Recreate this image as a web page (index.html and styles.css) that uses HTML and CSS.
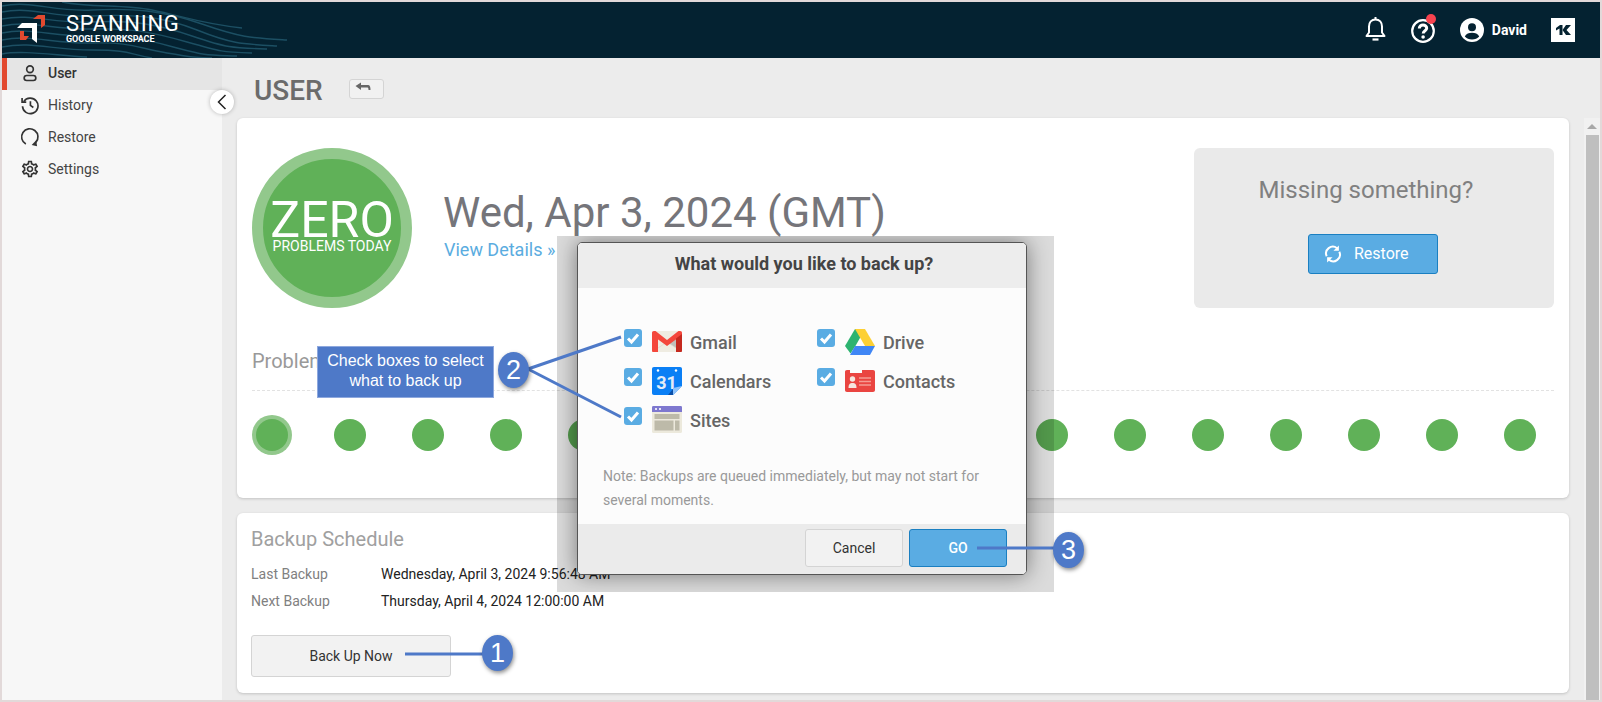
FILE: index.html
```html
<!DOCTYPE html>
<html lang="en">
<head>
<meta charset="utf-8">
<title>Spanning</title>
<link rel="stylesheet" href="styles.css">
</head>
<body>
<div class="frame">
  <header class="topbar">
    <svg class="waves" viewBox="0 0 290 56" width="290" height="56" fill="none" stroke="#1c4f63" stroke-width="1.400">
      <path d="M0 4C30 -2 50 10 90 8S160 8 200 22 250 36 285 38"/>
      <path d="M0 10C30 4 50 16 90 14S160 14 195 28 240 42 275 44"/>
      <path d="M0 17C30 11 50 22 90 20S155 22 190 34 230 46 265 47"/>
      <path d="M0 24C30 18 50 28 90 27S150 30 185 40 220 50 250 51"/>
      <path d="M0 31C30 25 50 35 90 34S145 38 175 46 205 53 235 54"/>
      <path d="M0 38C30 32 50 42 90 41S135 46 165 51 190 55 210 56"/>
      <path d="M0 45C30 39 50 48 90 48S125 52 150 56"/>
      <path d="M0 52C20 48 50 53 85 55"/>
      <path d="M60 0C90 6 120 2 150 8S200 22 240 26"/>
    </svg>
    <div class="brand">
      <svg class="logo" viewBox="0 0 30 30" width="30" height="30">
        <path d="M0 14 5 9H20V29L15 25V14Z" fill="#fff"/>
        <path d="M16 5 21 1H28V11L24 14V5Z" fill="#e2492f"/>
        <path d="M3 17H7V22H12L9 26H3Z" fill="#e2492f"/>
      </svg>
      <div class="brand-text">
        <div class="brand-name">SPANNING</div>
        <div class="brand-sub">GOOGLE WORKSPACE</div>
      </div>
    </div>
    <div class="top-actions">
      <svg class="bell" viewBox="0 0 21 25" width="21" height="25" fill="none" stroke="#fff" stroke-width="2">
        <path d="M1.500 20H19.500L17 16.500V10.500C17 6.500 14.500 3.500 10.500 3.500S4 6.500 4 10.500V16.500Z" stroke-linejoin="round"/>
        <path d="M10.500 1V3.500"/>
        <path d="M7.500 23.500H13.500" stroke-width="2.200"/>
      </svg>
      <div class="help">
        <svg viewBox="0 0 24 24" width="24" height="24" fill="none" stroke="#fff">
          <circle cx="12" cy="12" r="10.800" stroke-width="2.200"/>
          <path d="M8.300 9.500C8.300 7.300 10 6 12 6S15.700 7.300 15.700 9.300C15.700 11.700 12.200 11.800 12.200 14.500" stroke-width="3"/>
          <circle cx="12.100" cy="18" r="1.800" fill="#fff" stroke="none"/>
        </svg>
        <span class="help-dot"></span>
      </div>
      <div class="account">
        <svg viewBox="0 0 24 24" width="24" height="24">
          <circle cx="12" cy="12" r="12" fill="#fff"/>
          <circle cx="12" cy="9.200" r="4" fill="#042231"/>
          <path d="M4.800 18.600C6 15.800 9 14.800 12 14.800S18 15.800 19.200 18.600C17.500 20.500 15 21.500 12 21.500S6.500 20.500 4.800 18.600Z" fill="#042231"/>
        </svg>
        <span class="account-name">David</span>
      </div>
      <div class="kbox">
        <svg viewBox="0 0 24 24" width="24" height="24">
          <path d="M5 10 9 7H11.500V17H8.500V10.500L5 12.500Z" fill="#042231"/>
          <path d="M15 7H20L15.500 12 20 17H15L11.500 12Z" fill="#042231"/>
        </svg>
      </div>
    </div>
  </header>

  <div class="workspace">
    <nav class="sidebar">
      <a class="nav-item active">
        <svg viewBox="0 0 24 24" width="20" height="20" fill="none" stroke="#333" stroke-width="2"><circle cx="12" cy="7.500" r="4"/><rect x="5" y="15" width="14" height="6" rx="3"/></svg>
        <span>User</span>
      </a>
      <a class="nav-item">
        <svg viewBox="0 0 24 24" width="20" height="20" fill="none" stroke="#333" stroke-width="2"><path d="M4.500 8A9.300 9.300 0 1 1 3 13.500"/><path d="M2.500 3.500V8.500H7.500"/><path d="M12.500 7.500V12.500L16 15"/></svg>
        <span>History</span>
      </a>
      <a class="nav-item">
        <svg viewBox="0 0 24 24" width="20" height="20" fill="none" stroke="#333" stroke-width="2"><path d="M7 20.500A9.800 9.800 0 1 1 19 18.500"/><path d="M14 21.500 19.500 16 20.500 23Z" fill="#333" stroke="none"/></svg>
        <span>Restore</span>
      </a>
      <a class="nav-item">
        <svg viewBox="0 0 24 24" width="20" height="20"><path d="M19.430 12.980c.04-.32.07-.64.07-.98 0-.34-.03-.66-.07-.98l2.110-1.650c.19-.15.24-.42.12-.64l-2-3.460c-.09-.16-.26-.25-.44-.25-.06 0-.12.01-.17.03l-2.490 1c-.52-.4-1.080-.73-1.690-.98l-.38-2.650C14.460 2.180 14.250 2 14 2h-4c-.25 0-.46.18-.49.42l-.38 2.650c-.61.25-1.170.59-1.690.98l-2.490-1c-.06-.02-.12-.03-.18-.03-.17 0-.34.09-.43.25l-2 3.460c-.13.22-.07.49.12.64l2.110 1.650c-.04.32-.07.65-.07.98 0 .33.03.66.07.98l-2.110 1.650c-.19.15-.24.42-.12.64l2 3.460c.09.16.26.25.44.25.06 0 .12-.01.17-.03l2.490-1c.52.4 1.080.73 1.690.98l.38 2.650c.03.24.24.42.49.42h4c.25 0 .46-.18.49-.42l.38-2.650c.61-.25 1.170-.59 1.690-.98l2.490 1c.06.02.12.03.18.03.17 0 .34-.09.43-.25l2-3.460c.12-.22.07-.49-.12-.64l-2.110-1.650zm-1.980-1.710c.04.31.05.52.05.73 0 .21-.02.43-.05.73l-.14 1.130.89.7 1.080.84-.7 1.210-1.270-.51-1.040-.42-.9.68c-.43.32-.84.56-1.250.73l-1.060.43-.16 1.130-.2 1.350h-1.400l-.19-1.350-.16-1.130-1.060-.43c-.43-.18-.83-.41-1.230-.71l-.91-.7-1.060.43-1.270.51-.7-1.210 1.080-.84.89-.7-.14-1.130c-.03-.31-.05-.54-.05-.74s.02-.43.05-.73l.14-1.130-.89-.7-1.080-.84.7-1.210 1.270.51 1.040.42.9-.68c.43-.32.84-.56 1.250-.73l1.060-.43.16-1.130.2-1.350h1.390l.19 1.350.16 1.130 1.060.43c.43.18.83.41 1.230.71l.91.7 1.060-.43 1.270-.51.7 1.210-1.070.85-.89.7.14 1.130zM12 8c-2.210 0-4 1.790-4 4s1.790 4 4 4 4-1.790 4-4-1.790-4-4-4zm0 6c-1.100 0-2-.9-2-2s.9-2 2-2 2 .9 2 2-.9 2-2 2z"/></svg>
        <span>Settings</span>
      </a>
      <button class="collapse" type="button" aria-label="Collapse">
        <svg viewBox="0 0 12 16" width="12" height="16" fill="none" stroke="#222" stroke-width="1.500"><path d="M9.500 1 2.500 8 9.500 15"/></svg>
      </button>
    </nav>

    <main class="main">
      <div class="page-head">
        <h1 class="page-title">USER</h1>
        <button class="back" type="button" aria-label="Back">
          <svg viewBox="0 0 16 10" width="16" height="10"><path d="M0.500 4 6 0.500V3H13C15 3 15.500 5 15.500 8H13.500C13.500 6 13 5.500 12 5.500H6V8Z" fill="#666"/></svg>
        </button>
      </div>
      <div class="content">
        <div class="cards">
          <section class="card card-status">
            <div class="status-top">
              <div class="zero">
                <div class="zero-big">ZERO</div>
                <div class="zero-small">PROBLEMS TODAY</div>
              </div>
              <div class="date-block">
                <div class="date">Wed, Apr 3, 2024 (GMT)</div>
                <a class="details">View Details »</a>
              </div>
              <div class="missing">
                <div class="missing-title">Missing something?</div>
                <button class="primary restore-btn" type="button">
                  <svg viewBox="0 0 20 20" width="18" height="18" fill="none" stroke="#fff" stroke-width="2.200"><path d="M3 12.500A7.500 7.500 0 0 1 14.500 3.500"/><path d="M17 7.500A7.500 7.500 0 0 1 5.500 16.500"/><path d="M16.500 0.500V6.500H10.500Z" fill="#fff" stroke="none"/><path d="M3.500 19.500V13.500H9.500Z" fill="#fff" stroke="none"/></svg>
                  <span>Restore</span>
                </button>
              </div>
            </div>
            <h2 class="problems-title">Problems</h2>
            <div class="dots">
              <span class="dot first"></span><span class="dot"></span><span class="dot"></span><span class="dot"></span><span class="dot"></span><span class="dot"></span><span class="dot"></span><span class="dot"></span><span class="dot"></span><span class="dot"></span><span class="dot"></span><span class="dot"></span><span class="dot"></span><span class="dot"></span><span class="dot"></span><span class="dot"></span><span class="dot"></span>
            </div>
          </section>
          <section class="card card-schedule">
            <h2 class="schedule-title">Backup Schedule</h2>
            <div class="schedule-row"><span class="schedule-label">Last Backup</span><span>Wednesday, April 3, 2024 9:56:48 AM</span></div>
            <div class="schedule-row"><span class="schedule-label">Next Backup</span><span>Thursday, April 4, 2024 12:00:00 AM</span></div>
            <button class="secondary backup-btn" type="button">Back Up Now</button>
          </section>
        </div>
        <div class="scrollbar"><span class="scroll-arrow"></span><span class="scroll-thumb"></span></div>
      </div>
    </main>
  </div>

  <div class="scrim">
    <div class="dialog">
      <div class="dialog-head">What would you like to back up?</div>
      <div class="dialog-body">
        <div class="options">
          <div class="option">
            <span class="check"><svg viewBox="0 0 18 18" width="18" height="18" fill="none" stroke="#fff" stroke-width="3"><path d="M4 9.500 7.500 13 14 5.500"/></svg></span>
            <svg class="app-icon" viewBox="0 0 30 21" width="30" height="21">
              <rect width="30" height="21" rx="1.500" fill="#efece2"/>
              <path d="M24 4 15 11 30 21V4Z" fill="#c0bfba"/>
              <path d="M0 21 15 11 30 21" fill="none" stroke="#dcd9cf" stroke-width=".7"/>
              <path d="M0 2C0 .7 .7 0 2 0H3.500L15 9 26.500 0H28C29.300 0 30 .7 30 2V4L15 15 0 4Z" fill="#f4473c"/>
              <path d="M0 3 6 7.500V21H1.500C.5 21 0 20.500 0 19.500Z" fill="#f4473c"/>
              <path d="M30 3 24 7.500V21H28.500C29.500 21 30 20.500 30 19.500Z" fill="#c5291f"/>
            </svg>
            <span class="app-label">Gmail</span>
          </div>
          <div class="option">
            <span class="check"><svg viewBox="0 0 18 18" width="18" height="18" fill="none" stroke="#fff" stroke-width="3"><path d="M4 9.500 7.500 13 14 5.500"/></svg></span>
            <svg class="app-icon" viewBox="0 0 30 28" width="30" height="28">
              <path d="M10 1H20L11 17 5.500 25.500 0 18Z" fill="#2db370"/>
              <path d="M10 1H20L30 18H20Z" fill="#fdd034"/>
              <path d="M10 18H30L25 27H5Z" fill="#3f86f5"/>
            </svg>
            <span class="app-label">Drive</span>
          </div>
          <div class="option">
            <span class="check"><svg viewBox="0 0 18 18" width="18" height="18" fill="none" stroke="#fff" stroke-width="3"><path d="M4 9.500 7.500 13 14 5.500"/></svg></span>
            <svg class="app-icon" viewBox="0 0 30 28" width="30" height="28">
              <path d="M2 0H28C29.300 0 30 .7 30 2V19L21 28H2C.7 28 0 27.300 0 26V2C0 .7 .7 0 2 0Z" fill="#0a7ff5"/>
              <circle cx="6" cy="3.500" r="1.200" fill="#fff"/><circle cx="24" cy="3.500" r="1.200" fill="#fff"/>
              <text x="14.500" y="22" class="cal-num">31</text>
              <path d="M30 19 21 28V21Z" fill="#8ec3fb"/>
              <path d="M21 19V28H16L21 22Z" fill="#0a4fa8"/>
            </svg>
            <span class="app-label">Calendars</span>
          </div>
          <div class="option">
            <span class="check"><svg viewBox="0 0 18 18" width="18" height="18" fill="none" stroke="#fff" stroke-width="3"><path d="M4 9.500 7.500 13 14 5.500"/></svg></span>
            <svg class="app-icon" viewBox="0 0 30 22" width="30" height="22">
              <path d="M2 0H5V3H17V0H25L28 0C29.300 0 30 .7 30 2V20C30 21.300 29.300 22 28 22H2C.7 22 0 21.300 0 20V2C0 .7 .7 0 2 0Z" fill="#ea4541"/>
              <circle cx="7.500" cy="9" r="2.700" fill="#f6e6df"/>
              <path d="M3.500 18C3.500 14 5 13 7.500 13S11.500 14 11.500 18Z" fill="#f6e6df"/>
              <path d="M14 8H26M14 11.500H26M14 15H26" stroke="#f59b92" stroke-width="1.300"/>
            </svg>
            <span class="app-label">Contacts</span>
          </div>
          <div class="option">
            <span class="check"><svg viewBox="0 0 18 18" width="18" height="18" fill="none" stroke="#fff" stroke-width="3"><path d="M4 9.500 7.500 13 14 5.500"/></svg></span>
            <svg class="app-icon" viewBox="0 0 30 27" width="30" height="27">
              <rect width="30" height="27" rx="1.500" fill="#ece9dc"/>
              <path d="M1.500 0H28.500C29.500 0 30 .5 30 1.500V6H0V1.500C0 .5 .5 0 1.500 0Z" fill="#7e78cf"/>
              <rect x="3" y="2" width="2" height="2" fill="#e6e4f5"/><rect x="7" y="2" width="2" height="2" fill="#e6e4f5"/>
              <rect x="2.500" y="8" width="25" height="5" fill="#bdbaa9"/>
              <rect x="2.500" y="14.500" width="19" height="10" fill="#bdbaa9"/>
              <rect x="23" y="14.500" width="4.500" height="10" fill="#bdbaa9"/>
            </svg>
            <span class="app-label">Sites</span>
          </div>
        </div>
        <p class="note">Note: Backups are queued immediately, but may not start for several moments.</p>
      </div>
      <div class="dialog-foot">
        <button class="secondary dialog-btn" type="button">Cancel</button>
        <button class="primary dialog-btn go" type="button">GO</button>
      </div>
    </div>
  </div>

  <svg class="callout-lines" viewBox="0 0 1602 702" width="1602" height="702" fill="none" stroke="#4e79c8" stroke-width="3">
    <path d="M528 369 621 337"/>
    <path d="M528 369 621 417"/>
    <path d="M405 654H484"/>
    <path d="M977 548H1055"/>
  </svg>
  <div class="callout-box">Check boxes to select<br>what to back up</div>
  <div class="badge badge-one">1</div>
  <div class="badge badge-two">2</div>
  <div class="badge badge-three">3</div>
</div>
</body>
</html>
```
FILE: styles.css
```css
* { box-sizing: border-box; }
html, body { margin: 0; padding: 0; }
body { font-family: Roboto, "Liberation Sans", sans-serif; color: #333; overflow: hidden; }
button { font-family: inherit; cursor: pointer; }
h1, h2, p { margin: 0; }

.frame { position: relative; width: 1602px; height: 702px; border: 2px solid #e2d9d9; display: flex; flex-direction: column; background: #ececec; overflow: hidden; }

.topbar { position: relative; flex: none; height: 56px; background: #042231; display: flex; align-items: stretch; justify-content: space-between; overflow: hidden; }
.waves { position: absolute; left: 0; top: 0; }
.brand { position: relative; display: flex; padding: 10px 0 0 15px; }
.logo { margin-top: 2px; }
.brand-text { margin-left: 19px; }
.brand-name { font-size: 22px; line-height: 23px; color: #fff; letter-spacing: .7px; }
.brand-sub { font-size: 9px; line-height: 11px; font-weight: 700; color: #fff; letter-spacing: -.1px; margin-top: -1px; }

.top-actions { display: flex; align-items: flex-start; padding: 14px 25px 0 0; }
.bell { margin-right: 25px; }
.help { position: relative; width: 24px; height: 24px; margin: 3px 25px 0 0; }
.help svg { display: block; }
.help-dot { position: absolute; right: -1px; top: -5px; width: 10px; height: 10px; border-radius: 50%; background: #f8434f; }
.account { display: flex; align-items: center; gap: 8px; margin: 2px 24px 0 0; height: 24px; }
.account-name { font-size: 14px; font-weight: 700; color: #fff; }
.kbox { width: 24px; height: 24px; background: #fff; margin-top: 2px; }
.kbox svg { display: block; }

.workspace { flex: 1; display: flex; min-height: 0; }

.sidebar { position: relative; flex: none; width: 220px; background: #f7f7f7; }
.nav-item { display: flex; align-items: center; height: 32px; padding: 0 0 2px 18px; font-size: 14px; color: #444; gap: 8px; }
.nav-item svg { flex: none; fill: #333; }
.nav-item svg[fill="none"] { fill: none; }
.nav-item.active { background: #e5e5e5; border-left: 5px solid #e2492f; padding-left: 13px; font-weight: 500; color: #333; }
.collapse { position: absolute; right: -12px; top: 32px; width: 24px; height: 24px; padding: 0; border: 0; border-radius: 50%; background: #fff; box-shadow: 0 0 4px rgba(0,0,0,.25); display: flex; align-items: center; justify-content: center; z-index: 1; }

.main { flex: 1; min-width: 0; padding-left: 15px; display: flex; flex-direction: column; }
.page-head { flex: none; height: 60px; display: flex; align-items: center; padding: 4px 0 0 17px; }
.page-title { font-size: 28px; font-weight: 500; color: #6b6b6b; margin-right: 26px; }
.back { width: 35px; height: 20px; margin-top: -3px; padding: 0; background: #f1f1f1; border: 1px solid #d4d4d4; border-radius: 3px; display: flex; align-items: center; justify-content: center; }
.back svg { margin-left: -6px; margin-top: -3px; }

.content { flex: 1; display: flex; gap: 15px; min-height: 0; }
.cards { width: 1332px; flex: none; display: flex; flex-direction: column; gap: 15px; }
.card { background: #fff; border-radius: 6px; box-shadow: 0 1px 3px rgba(0,0,0,.18); }

.card-status { height: 380px; padding: 30px 15px 0; }
.status-top { display: flex; height: 160px; }
.zero { flex: none; width: 160px; height: 160px; border-radius: 50%; background: #60b158; border: 11px solid #92c88c; color: #fff; text-align: center; padding-top: 42px; }
.zero-big { font-size: 50px; line-height: 38px; }
.zero-small { font-size: 14px; line-height: 14px; white-space: nowrap; }
.date-block { flex: 1; padding: 40px 0 0 31px; }
.date { font-size: 42px; line-height: 50px; color: #75757a; white-space: nowrap; }
.details { display: block; font-size: 18px; line-height: 22px; color: #5aace0; margin: 1px 0 0 1px; }
.missing { flex: none; width: 360px; height: 160px; background: #eaeaea; border-radius: 6px; text-align: center; padding-top: 28px; }
.missing-title { font-size: 24px; line-height: 28px; color: #808080; margin-bottom: 30px; padding-right: 16px; }
.primary { background: #5aace3; border: 1px solid #1a7fc1; border-radius: 3px; color: #fff; }
.secondary { background: #f2f2f2; border: 1px solid #d4d4d4; border-radius: 3px; color: #333; }
.restore-btn { width: 130px; height: 40px; font-size: 16px; display: inline-flex; align-items: center; padding: 0 0 1px 15px; gap: 12px; margin-right: 2px; }

.problems-title { font-size: 20px; line-height: 26px; font-weight: 400; color: #999; margin-top: 40px; border-bottom: 1px dashed #e2e2e2; height: 43px; }
.dots { display: flex; gap: 46px; padding: 28px 0 0 4px; }
.dot { flex: none; width: 32px; height: 32px; border-radius: 50%; background: #60b158; }
.dot.first { box-shadow: 0 0 0 4px #92c88c; }

.card-schedule { height: 180px; padding: 13px 14px 0; }
.schedule-title { font-size: 20px; line-height: 26px; font-weight: 400; color: #a0a0a0; margin-bottom: 9px; }
.schedule-row { display: flex; font-size: 14px; line-height: 27px; color: #222; }
.schedule-label { width: 130px; color: #808080; }
.backup-btn { display: block; width: 200px; height: 42px; margin-top: 20px; font-size: 14px; }

.scrollbar { flex: none; width: 16px; background: #f1f1f1; padding: 0 1px; display: flex; flex-direction: column; align-items: center; }
.scroll-arrow { flex: none; width: 0; height: 0; margin: 6px 0; border: 5px solid transparent; border-top: 0; border-bottom-color: #a8a8a8; }
.scroll-thumb { flex: 1; width: 13px; background: #bfbfbf; }

.scrim { position: absolute; left: 555px; top: 234px; width: 497px; height: 356px; padding: 6px 0 0 20px; background: rgba(0,0,0,.14); overflow: hidden; }
.dialog { width: 450px; height: 333px; background: #fcfcfc; border: 1px solid #555; border-radius: 5px; box-shadow: 0 0 22px rgba(0,0,0,.45); display: flex; flex-direction: column; overflow: hidden; }
.dialog-head { flex: none; height: 45px; padding-left: 4px; background: #ededed; text-align: center; font-size: 18px; font-weight: 700; line-height: 42px; color: #444; }
.dialog-body { flex: 1; padding: 34px 25px 0; min-height: 0; }
.options { display: grid; grid-template-columns: 193px 1fr; grid-auto-rows: 39px; height: 117px; }
.option { display: flex; align-items: center; position: relative; height: 39px; padding-left: 49px; }
.check { position: absolute; left: 21px; top: 7px; width: 18px; height: 18px; border-radius: 3px; background: #5aace3; }
.check svg { display: block; }
.app-icon { flex: none; margin: 0 8px 0 0; }
.app-label { font-size: 18px; font-weight: 500; color: #666; white-space: nowrap; margin-top: 2px; }
.cal-num { font-family: Roboto, sans-serif; font-size: 18px; font-weight: 700; fill: #e3ecf7; text-anchor: middle; }
.note { font-size: 14px; line-height: 24px; color: #999; margin: 25px 0 0; width: 390px; }
.dialog-foot { flex: none; height: 50px; background: #ebebeb; display: flex; justify-content: flex-end; gap: 6px; padding: 5px 19px 0 0; }
.dialog-btn { width: 98px; height: 38px; font-size: 14px; }
.go { font-weight: 500; }

.callout-lines { position: absolute; left: -2px; top: -2px; pointer-events: none; }
.callout-box { position: absolute; left: 315px; top: 344px; width: 177px; height: 52px; background: #4e79c8; border: 1px solid #8ea8de; color: #fff; font-family: "Liberation Sans", Arial, sans-serif; font-size: 16px; line-height: 20px; text-align: center; padding-top: 4px; }
.badge { position: absolute; width: 31px; height: 36px; border-radius: 50%; background: #4e79c8; color: #fff; font-family: "Liberation Sans", Arial, sans-serif; font-size: 27px; line-height: 36px; text-align: center; box-shadow: 1px 2px 4px rgba(0,0,0,.45); }
.badge-one { left: 480px; top: 633px; }
.badge-two { left: 496px; top: 350px; }
.badge-three { left: 1051px; top: 530px; }
```
